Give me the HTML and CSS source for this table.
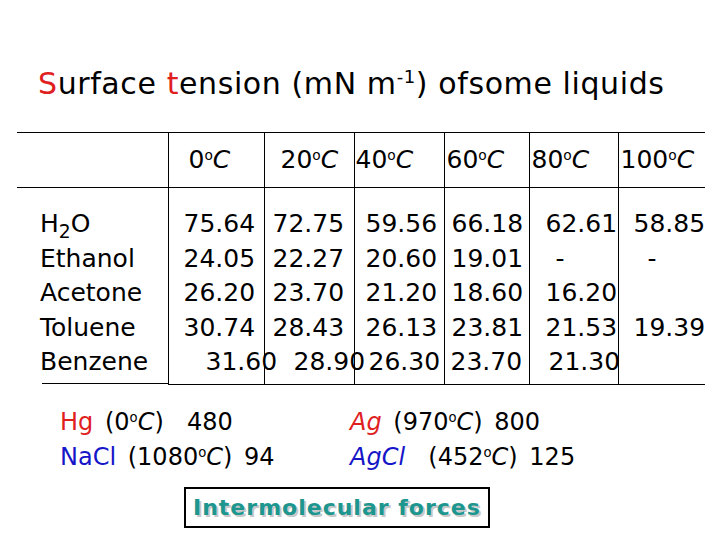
FILE: index.html
```html
<!DOCTYPE html>
<html lang="en">
<head>
  <meta charset="UTF-8">
  <title>Surface tension</title>
  <link rel="stylesheet" href="styles.css">
</head>
<body>
  <h1 class="title"><span class="red">S</span>urface <span class="red">t</span>ension (mN m<sup>-1</sup>) ofsome liquids</h1>

  <table class="data">
    <colgroup>
      <col class="c-label">
      <col class="c-1">
      <col class="c-2">
      <col class="c-3">
      <col class="c-4">
      <col class="c-5">
      <col class="c-6">
    </colgroup>
    <thead>
      <tr>
        <th></th>
        <th>0<span class="deg">o</span><i>C</i></th>
        <th>20<span class="deg">o</span><i>C</i></th>
        <th>40<span class="deg">o</span><i>C</i></th>
        <th>60<span class="deg">o</span><i>C</i></th>
        <th>80<span class="deg">o</span><i>C</i></th>
        <th>100<span class="deg">o</span><i>C</i></th>
      </tr>
    </thead>
    <tbody>
      <tr>
        <td class="label">H<sub>2</sub>O</td>
        <td>75.64</td><td>72.75</td><td>59.56</td><td>66.18</td><td>62.61</td><td>58.85</td>
      </tr>
      <tr>
        <td class="label">Ethanol</td>
        <td>24.05</td><td>22.27</td><td>20.60</td><td>19.01</td><td><span class="dash">-</span></td><td><span class="dash wide">-</span></td>
      </tr>
      <tr>
        <td class="label">Acetone</td>
        <td>26.20</td><td>23.70</td><td>21.20</td><td>18.60</td><td>16.20</td><td></td>
      </tr>
      <tr>
        <td class="label">Toluene</td>
        <td>30.74</td><td>28.43</td><td>26.13</td><td>23.81</td><td>21.53</td><td>19.39</td>
      </tr>
      <tr class="spread">
        <td class="label">Benzene</td>
        <td>31.60</td><td>28.90</td><td>26.30</td><td>23.70</td><td>21.30</td><td></td>
      </tr>
    </tbody>
  </table>

  <div class="notes">
    <div class="note-col">
      <div><span class="red">Hg</span> (0<span class="deg">o</span><i>C</i>)&nbsp; 480</div>
      <div><span class="blue">NaCl</span> (1080<span class="deg">o</span><i>C</i>) 94</div>
    </div>
    <div class="note-col">
      <div><i class="red">Ag</i> (970<span class="deg">o</span><i>C</i>) 800</div>
      <div><i class="blue">AgCl</i>&nbsp; (452<span class="deg">o</span><i>C</i>) 125</div>
    </div>
  </div>

  <div class="forces">Intermolecular forces</div>
</body>
</html>
```

FILE: styles.css
```css
body {
  margin: 0;
  font-family: "DejaVu Sans", sans-serif;
  color: #000;
  background-color: #fff;
}

.red {
  color: #e0201e;
}

.blue {
  color: #1616c8;
}

.title {
  margin: 0;
  padding: 66px 0 0 38px;
  font-size: 30px;
  font-weight: normal;
  line-height: 36px;
  letter-spacing: 0.6px;
}

.title sup {
  font-size: 0.6em;
  line-height: 0;
  vertical-align: 0.6em;
}

.deg {
  font-size: 0.55em;
  line-height: 0;
  vertical-align: 0.6em;
}

/* table */

.data {
  margin: 30px 0 0 17px;
  width: 688px;
  border-collapse: collapse;
  table-layout: fixed;
  border-top: 1px solid #000;
}

.c-label { width: 151px; }
.c-1 { width: 96px; }
.c-2 { width: 90px; }
.c-3 { width: 90px; }
.c-4 { width: 85px; }
.c-5 { width: 89px; }
.c-6 { width: 87px; }

.data th {
  padding: 0;
  font-size: 25px;
  font-weight: normal;
  line-height: 54px;
  text-align: left;
  white-space: nowrap;
  border-bottom: 1px solid #000;
}

.data td {
  padding: 0;
  font-size: 25px;
  line-height: 34.5px;
  white-space: nowrap;
}

.data th + th,
.data td + td {
  border-left: 1px solid #000;
}

.data sub {
  font-size: 0.75em;
  line-height: 0;
  vertical-align: -0.3em;
}

.data .label {
  padding-left: 23px;
}

.data tbody tr:first-child td {
  padding-top: 19px;
}

.data tbody tr:last-child td {
  padding-bottom: 4px;
  border-bottom: 1px solid #000;
}

.data tbody tr:last-child td.label {
  border-bottom: 0;
  background: linear-gradient(#000, #000) no-repeat right bottom / calc(100% - 25px) 1px;
}

.data th:nth-child(2) { padding-left: 20px; }
.data th:nth-child(3) { padding-left: 16px; }
.data th:nth-child(4) { padding-left: 1px; }
.data th:nth-child(5) { padding-left: 2px; }
.data th:nth-child(6) { padding-left: 2px; }
.data th:nth-child(7) { padding-left: 2px; }

.data td:nth-child(2) { padding-left: 15px; }
.data td:nth-child(3) { padding-left: 8px; }
.data td:nth-child(4) { padding-left: 11px; }
.data td:nth-child(5) { padding-left: 7px; }
.data td:nth-child(6) { padding-left: 16px; }
.data td:nth-child(7) { padding-left: 15px; }

.dash {
  margin-left: 10px;
}

.dash.wide {
  margin-left: 14px;
}

/* benzene row runs across the column lines */
.data .spread td:nth-child(2) { padding-left: 37px; }
.data .spread td:nth-child(3) { padding-left: 29px; }
.data .spread td:nth-child(4) { padding-left: 14px; }
.data .spread td:nth-child(5) { padding-left: 6px; }
.data .spread td:nth-child(6) { padding-left: 19px; }

/* notes under the table */

.notes {
  display: flex;
  margin-top: 20px;
  padding-left: 60px;
  font-size: 24px;
  line-height: 35px;
  word-spacing: 4px;
}

.note-col {
  width: 290px;
}

.forces {
  width: max-content;
  margin: 12px 0 0 184px;
  padding: 0 7px;
  border: 2px solid #000;
  color: #1c968f;
  font-size: 22px;
  font-weight: bold;
  line-height: 37px;
  letter-spacing: 1px;
  text-shadow: 2px 2px 0 #c8c8c8;
}
```
